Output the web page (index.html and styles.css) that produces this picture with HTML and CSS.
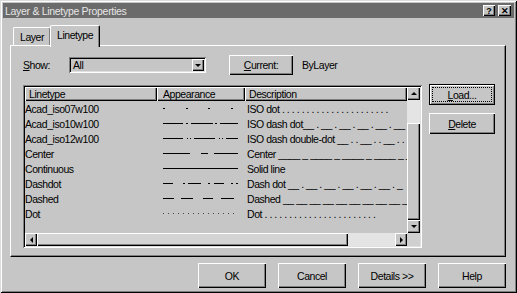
FILE: index.html
```html
<!DOCTYPE html>
<html>
<head>
<meta charset="utf-8">
<link rel="stylesheet" href="styles.css">
</head>
<body>
<div class="win">
  <div class="title">
    <span class="title-text">Layer &amp; Linetype Properties</span>
    <div class="tbtns"><span class="tb">?</span><span class="tb tb-x">✕</span></div>
  </div>
  <div class="tabs">
    <div class="tab">Layer</div>
    <div class="tab sel">Linetype</div>
  </div>
  <div class="panel">
    <div class="showrow">
      <span class="lbl"><u>S</u>how:</span>
      <div class="combo"><span class="combo-val">All</span><span class="combo-btn"><i class="tri-down"></i></span></div>
      <div class="btn btn-current"><span><u>C</u>urrent:</span></div>
      <span class="bylayer">ByLayer</span>
    </div>
    <div class="main">
      <div class="list">
        <div class="lbody">
          <div class="cols">
            <div class="hdr">
              <div class="hc c1">Linetype</div>
              <div class="hc c2">Appearance</div>
              <div class="hc c3">Description</div>
            </div>
            <div class="row"><div class="c1">Acad_iso07w100</div><div class="c2"><svg width="76" height="3"><path d="M0 1.5h2M23 1.5h2M45 1.5h2M68 1.5h2"/></svg></div><div class="c3">ISO dot . . . . . . . . . . . . . . . . . . . . . .</div></div>
            <div class="row"><div class="c1">Acad_iso10w100</div><div class="c2"><svg width="76" height="3"><path d="M0 1.5h20M23 1.5h1.5M28 1.5h22M52 1.5h1.5M57 1.5h18"/></svg></div><div class="c3">ISO dash dot__ . __ . __ . __ . __ . __ . __</div></div>
            <div class="row"><div class="c1">Acad_iso12w100</div><div class="c2"><svg width="76" height="3"><path d="M0 1.5h20M24 1.5h1M27 1.5h1M31 1.5h21M56 1.5h1M59 1.5h1M63 1.5h12"/></svg></div><div class="c3">ISO dash double-dot __ . . __ . . __ . .</div></div>
            <div class="row"><div class="c1">Center</div><div class="c2"><svg width="76" height="3"><path d="M0 1.5h27M38 1.5h7M51 1.5h24"/></svg></div><div class="c3">Center ____ _ ____ _ ____ _ ____ _ ___</div></div>
            <div class="row"><div class="c1">Continuous</div><div class="c2"><svg width="76" height="3"><path d="M0 1.5h75"/></svg></div><div class="c3">Solid line</div></div>
            <div class="row"><div class="c1">Dashdot</div><div class="c2"><svg width="76" height="3"><path d="M0 1.5h10M20 1.5h1.5M25 1.5h13M45 1.5h1.5M51 1.5h10M68 1.5h1.5M73 1.5h1.5"/></svg></div><div class="c3">Dash dot __ . __ . __ . __ . __ . __ . _</div></div>
            <div class="row"><div class="c1">Dashed</div><div class="c2"><svg width="76" height="3"><path d="M0 1.5h11M18 1.5h12M40 1.5h10M58 1.5h13"/></svg></div><div class="c3">Dashed __ __ __ __ __ __ __ __ __ __</div></div>
            <div class="row"><div class="c1">Dot</div><div class="c2"><svg width="76" height="3"><path class="dots" d="M0 1.5h75"/></svg></div><div class="c3">Dot . . . . . . . . . . . . . . . . . . . . . . .</div></div>
          </div>
          <div class="vs">
            <div class="sbtn"><i class="tri-up"></i></div>
            <div class="track vtrack"></div>
            <div class="thumb vthumb"></div>
            <div class="sbtn"><i class="tri-down"></i></div>
          </div>
        </div>
        <div class="hs">
          <div class="sbtn"><i class="tri-left"></i></div>
          <div class="thumb hthumb"></div>
          <div class="track htrack"></div>
          <div class="sbtn"><i class="tri-right"></i></div>
          <div class="corner"></div>
        </div>
      </div>
      <div class="side">
        <div class="btn btn-side focus"><span class="focus-in"><u>L</u>oad...</span></div>
        <div class="btn btn-side"><span><u>D</u>elete</span></div>
      </div>
    </div>
  </div>
  <div class="footer">
    <div class="btn fbtn">OK</div>
    <div class="btn fbtn">Cancel</div>
    <div class="btn fbtn">Details &gt;&gt;</div>
    <div class="btn fbtn">Help</div>
  </div>
</div>
</body>
</html>
```

FILE: styles.css
```css
* { box-sizing: border-box; }
body {
  margin: 0;
  background: #c6c6c6;
  font-family: "Liberation Sans", Arial, sans-serif;
  font-size: 10.5px;
  letter-spacing: -0.45px;
  color: #000;
}
u { text-decoration: underline; text-underline-offset: 1px; }
.win {
  width: 517px;
  height: 293px;
  padding: 3px;
  background: #c6c6c6;
  box-shadow: inset 1px 1px #dcdcdc, inset -1px -1px #000, inset 2px 2px #fff, inset -2px -2px #808080;
  display: flex;
  flex-direction: column;
}
.title {
  height: 15px;
  background: #6b6b6b;
  color: #e6e6e6;
  display: flex;
  align-items: center;
  justify-content: space-between;
  padding: 0 3px 0 2px;
}
.title-text { letter-spacing: -0.3px; }
.tbtns { display: flex; gap: 3px; }
.tb {
  width: 12px;
  height: 11px;
  background: #c6c6c6;
  color: #000;
  font-weight: bold;
  font-size: 9px;
  letter-spacing: 0;
  display: flex;
  align-items: center;
  justify-content: center;
  box-shadow: inset 1px 1px #fff, inset -1px -1px #000, inset -2px -2px #808080;
}
.tb-x { width: 13px; font-size: 9px; }

.tabs {
  display: flex;
  align-items: flex-end;
  height: 20px;
  margin: 7px 8px 0 7px;
  padding-left: 3px;
  position: relative;
  z-index: 1;
}
.tab {
  height: 18px;
  padding: 0 6px;
  display: flex;
  align-items: center;
  border-top: 1px solid #fff;
  border-left: 1px solid #fff;
  border-right: 1px solid #000;
  border-radius: 2px 2px 0 0;
  box-shadow: inset -1px 0 #808080;
  background: #c6c6c6;
}
.tab.sel {
  height: 22px;
  margin-bottom: -2px;
  margin-left: -1px;
  padding: 0 6px 3px 6px;
}
.panel {
  height: 212px;
  margin: 0 8px 0 7px;
  padding: 9px 0 0 12px;
  border-top: 1px solid #fff;
  border-left: 1px solid #fff;
  border-right: 1px solid #000;
  border-bottom: 1px solid #000;
  box-shadow: inset -1px -1px #808080;
}
.showrow { display: flex; align-items: center; height: 20px; }
.lbl { width: 46px; }
.combo {
  width: 137px;
  height: 16px;
  display: flex;
  align-items: center;
  justify-content: space-between;
  padding: 2px;
  box-shadow: inset 1px 1px #808080, inset -1px -1px #fff, inset 2px 2px #000, inset -2px -2px #dfdfdf;
  background: #c6c6c6;
}
.combo-val { padding-left: 2px; }
.combo-btn {
  width: 12px;
  height: 12px;
  display: flex;
  align-items: center;
  justify-content: center;
  box-shadow: inset 1px 1px #fff, inset -1px -1px #000, inset -2px -2px #808080;
}
.btn {
  display: flex;
  align-items: center;
  justify-content: center;
  background: #c6c6c6;
  box-shadow: inset 1px 1px #fff, inset -1px -1px #000, inset -2px -2px #808080;
}
.btn-current { width: 64px; height: 20px; margin-left: 23px; }
.bylayer { margin-left: 9px; }

.main { display: flex; margin-top: 10px; }
.list {
  width: 399px;
  height: 163px;
  padding: 2px;
  display: flex;
  flex-direction: column;
  box-shadow: inset 1px 1px #808080, inset -1px -1px #fff, inset 2px 2px #000, inset -2px -2px #dfdfdf;
}
.lbody { display: flex; height: 146px; }
.cols { flex: 1; overflow: hidden; }
.hdr { display: flex; height: 14px; }
.hc {
  height: 14px;
  display: flex;
  align-items: center;
  padding-left: 4px;
  box-shadow: inset 1px 1px #fff, inset -1px -1px #000, inset -2px -2px #808080;
}
.c1 { width: 132px; flex: none; }
.c2 { width: 88px; flex: none; }
.c3 { flex: 1; white-space: nowrap; overflow: hidden; }
.hdr .c2 { padding-left: 6px; }
.row { display: flex; height: 15px; align-items: center; }
.row .c1 { padding-left: 0; }
.row .c2 { padding-left: 6px; display: flex; align-items: center; }
.row .c3 { padding-left: 2px; }
svg { display: block; }
svg path { stroke: #000; stroke-width: 1; fill: none; shape-rendering: crispEdges; }
svg path.dots { stroke: #444; stroke-dasharray: 1 4; }

.vs { width: 13px; display: flex; flex-direction: column; }
.sbtn {
  width: 13px;
  height: 13px;
  flex: none;
  display: flex;
  align-items: center;
  justify-content: center;
  background: #c6c6c6;
  box-shadow: inset 1px 1px #fff, inset -1px -1px #000, inset -2px -2px #808080;
}
.hs .sbtn { width: 12px; }
.track { background: #e4e4e4; }
.vtrack { height: 23px; }
.thumb {
  background: #c6c6c6;
  box-shadow: inset 1px 1px #fff, inset -1px -1px #000, inset -2px -2px #808080;
}
.vthumb { height: 97px; }
.hs { display: flex; height: 13px; }
.hthumb { width: 311px; background: #d4d4d4; }
.htrack { width: 47px; }
.corner { width: 13px; background: #d0d0d0; }

.tri-up, .tri-down, .tri-left, .tri-right { display: block; width: 0; height: 0; }
.tri-up { border-left: 3px solid transparent; border-right: 3px solid transparent; border-bottom: 3px solid #000; }
.tri-down { border-left: 3px solid transparent; border-right: 3px solid transparent; border-top: 3px solid #000; }
.tri-left { border-top: 3px solid transparent; border-bottom: 3px solid transparent; border-right: 3px solid #000; }
.tri-right { border-top: 3px solid transparent; border-bottom: 3px solid transparent; border-left: 3px solid #000; }

.side { display: flex; flex-direction: column; gap: 8px; margin-left: 7px; margin-top: -1px; }
.btn-side { width: 66px; height: 21px; }
.btn.focus {
  box-shadow: inset 0 0 0 1px #000, inset 2px 2px #fff, inset -2px -2px #808080;
}
.focus-in {
  width: 58px;
  height: 13px;
  display: flex;
  align-items: center;
  justify-content: center;
  outline: 1px dotted #000;
}

.footer {
  display: flex;
  justify-content: flex-end;
  gap: 12px;
  margin-top: 6px;
  padding-right: 8px;
}
.fbtn { width: 68px; height: 25px; }
```
